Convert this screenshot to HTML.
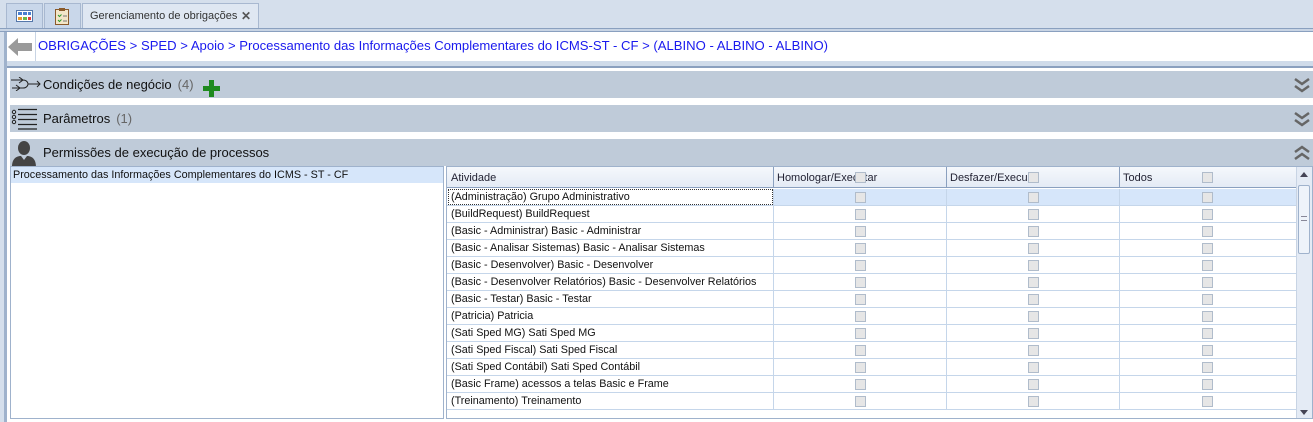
<!DOCTYPE html>
<html><head><meta charset="utf-8"><style>
*{box-sizing:border-box;margin:0;padding:0}
body{width:1313px;height:422px;background:#d5dfec;font-family:"Liberation Sans",sans-serif;position:relative;overflow:hidden}
.abs{position:absolute}
.tab{position:absolute;top:3px;height:25px;background:#c9d7ea;border:1px solid #a8b8d0;border-bottom:none}
.bar{position:absolute;left:10px;width:1303px;height:27px;background:#bfcbd9}
.bar .t{position:absolute;left:33px;top:6px;font-size:13px;color:#111}
.bar .n{color:#666;margin-left:6px}
.chev{position:absolute;right:2px;top:5px}
.row{position:absolute;left:447px;width:849px;height:17px;border-bottom:1px solid #c5d6ea;font-size:10.8px;color:#111}
.row span{position:absolute;left:4px;top:2px}
.cb{position:absolute;width:11px;height:11px;border:1px solid #b0bccb;background:#e6e6e6;top:3px}
.vl{position:absolute;top:168px;width:1px;height:250px;background:#c5d6ea}
</style></head><body>
<div class="tab" style="left:6px;width:37px"><svg class="abs" style="left:9px;top:6px" width="17" height="12"><rect x="0.5" y="0.5" width="16" height="11" fill="#fff" stroke="#5577aa"/><rect x="2" y="2" width="4" height="3" fill="#4a7fd0"/><rect x="7" y="2" width="4" height="3" fill="#4a7fd0"/><rect x="12" y="2" width="3" height="3" fill="#4a7fd0"/><rect x="2" y="7" width="4" height="3" fill="#e99a2a"/><rect x="7" y="7" width="4" height="3" fill="#6cb84a"/><rect x="12" y="7" width="3" height="3" fill="#e04040"/></svg></div>
<div class="tab" style="left:44px;width:37px"><svg class="abs" style="left:10px;top:3px" width="14" height="18"><rect x="0.5" y="2.5" width="13" height="15" fill="#f3e6c8" stroke="#8a5a2a"/><rect x="4" y="1" width="6" height="3" fill="#8a5a2a"/><path d="M3 8l1.5 1.5 2-2M3 13l1.5 1.5 2-2" stroke="#2a9a2a" fill="none"/><path d="M8 9h4M8 14h4" stroke="#777"/></svg></div>
<div class="tab" style="left:82px;width:177px;background:#dfe7f2;height:26px"><span class="abs" style="left:7px;top:6px;font-size:11px;color:#333">Gerenciamento de obrigações</span><span class="abs" style="left:158px;top:5px;font-size:12px;color:#555;font-weight:bold">✕</span></div>
<div class="abs" style="left:0;top:28px;width:1313px;height:4px;border-top:1px solid #8aa0bf;border-bottom:1px solid #8aa0bf;background:#c8d4e4"></div>
<div class="abs" style="left:4px;top:32px;width:3px;height:390px;background:#9fb2cc"></div>
<div class="abs" style="left:7px;top:32px;width:1306px;height:29px;background:#fff"></div>
<div class="abs" style="left:35px;top:32px;width:1px;height:29px;background:#c8d4e4"></div>
<svg class="abs" style="left:8px;top:37px" width="25" height="20"><path d="M0 10L10 1V6H24V14H10V19Z" fill="#9a9a9a"/></svg>
<div class="abs" style="left:38px;top:38px;font-size:13.1px;color:#1a1aee">OBRIGAÇÕES &gt; SPED &gt; Apoio &gt; Processamento das Informações Complementares do ICMS-ST - CF &gt; (ALBINO - ALBINO - ALBINO)</div>
<div class="abs" style="left:7px;top:61px;width:1306px;height:6px;background:#cfdbea"></div>
<div class="abs" style="left:646px;top:61px;font-size:9px;color:#8a9ab0;letter-spacing:0">····</div>
<div class="abs" style="left:7px;top:66px;width:1306px;height:2px;background:#8aa0bf"></div>
<div class="abs" style="left:7px;top:68px;width:1306px;height:354px;background:#fff"></div>

<div class="bar" style="top:71px"><svg class="abs" style="left:1px;top:6px" width="30" height="14"><path d="M0 3h12c4 0 5 3 5 4s-1 4-5 4H1M8 0l4 3-4 3M5 8l4 3-4 3M17 7h12M26 4l3 3-3 3" stroke="#222" fill="none"/></svg><span class="t">Condições de negócio<span class="n">(4)</span></span><svg class="abs" style="left:193px;top:9px" width="17" height="17"><path d="M6 0h5v6h6v5h-6v6H6v-6H0V6h6z" fill="#1e8a1e"/></svg><svg class="chev" width="18" height="18"><path d="M2 3l7 5 7-5M2 10l7 5 7-5" stroke="#666" stroke-width="2.5" fill="none"/></svg></div>
<div class="bar" style="top:105px"><svg class="abs" style="left:1px;top:3px" width="28" height="22"><circle cx="3" cy="4" r="1.7" stroke="#222" fill="none"/><circle cx="3" cy="9" r="1.7" stroke="#222" fill="none"/><circle cx="3" cy="14" r="1.7" stroke="#222" fill="none"/><path d="M7 1.5h19M7 6.5h19M7 11.5h19M7 16.5h19M7 21h19" stroke="#222" stroke-width="1.2"/></svg><span class="t">Parâmetros<span class="n">(1)</span></span><svg class="chev" width="18" height="18"><path d="M2 3l7 5 7-5M2 10l7 5 7-5" stroke="#666" stroke-width="2.5" fill="none"/></svg></div>
<div class="bar" style="top:139px"><svg class="abs" style="left:1px;top:1px" width="26" height="27"><ellipse cx="13" cy="8" rx="6" ry="7" fill="#444"/><path d="M1 27c0-8 4-11 9-11l3 4 3-4c5 0 9 3 9 11z" fill="#444"/></svg><span class="t">Permissões de execução de processos</span><svg class="chev" width="18" height="18"><path d="M2 8l7-5 7 5M2 15l7-5 7 5" stroke="#666" stroke-width="2.5" fill="none"/></svg></div>

<div class="abs" style="left:10px;top:166px;width:434px;height:253px;border:1px solid #9fb2cc;background:#fff"></div>
<div class="abs" style="left:11px;top:167px;width:432px;height:16px;background:#d6e6fa"></div>
<div class="abs" style="left:13px;top:169px;font-size:10.8px;color:#111">Processamento das Informações Complementares do ICMS - ST - CF</div>

<div class="abs" style="left:446px;top:166px;width:867px;height:253px;border:1px solid #9fb2cc;background:#fff"></div>
<div class="abs" style="left:447px;top:167px;width:849px;height:21px;background:linear-gradient(#f5f8fc,#e4ebf5);border-bottom:1px solid #8aa0bf;font-size:11px;color:#223">
<span class="abs" style="left:4px;top:5px">Atividade</span>
<span class="abs" style="left:330px;top:5px">Homologar/Executar</span>
<span class="abs" style="left:503px;top:5px">Desfazer/Execu</span>
<span class="abs" style="left:676px;top:5px">Todos</span>
<div class="cb" style="left:408px;top:5px"></div><div class="cb" style="left:581px;top:5px"></div><div class="cb" style="left:755px;top:5px"></div>
<div class="abs" style="left:326px;top:0;width:1px;height:21px;background:#8aa0bf"></div>
<div class="abs" style="left:499px;top:0;width:1px;height:21px;background:#8aa0bf"></div>
<div class="abs" style="left:672px;top:0;width:1px;height:21px;background:#8aa0bf"></div>
</div>
<div class="abs" style="left:773px;top:189px;width:523px;height:16px;background:#d6e6fa"></div>
<div id="rows"></div>
<div class="vl" style="left:773px;top:189px;height:221px"></div>
<div class="vl" style="left:946px;top:189px;height:221px"></div>
<div class="vl" style="left:1119px;top:189px;height:221px"></div>
<div class="abs" style="left:448px;top:189px;width:325px;height:16px;border:1px dotted #333"></div>
<div class="abs" style="left:1296px;top:167px;width:16px;height:251px;background:#e4ebf5;border-left:1px solid #c8d4e4"></div>
<div class="abs" style="left:1300px;top:172px;width:0;height:0;border:4px solid transparent;border-bottom:5px solid #445;border-top:none"></div>
<div class="abs" style="left:1298px;top:185px;width:12px;height:69px;border:1px solid #9fb2cc;border-radius:2px;background:#eef3fa"></div>
<div class="abs" style="left:1301px;top:216px;width:6px;height:5px;border-top:1px solid #889;border-bottom:1px solid #889"></div>
<div class="abs" style="left:1300px;top:410px;width:0;height:0;border:4px solid transparent;border-top:5px solid #445;border-bottom:none"></div>
<script>
var t=["(Administração) Grupo Administrativo","(BuildRequest) BuildRequest","(Basic - Administrar) Basic - Administrar","(Basic - Analisar Sistemas) Basic - Analisar Sistemas","(Basic - Desenvolver) Basic - Desenvolver","(Basic - Desenvolver Relatórios) Basic - Desenvolver Relatórios","(Basic - Testar) Basic - Testar","(Patricia) Patricia","(Sati Sped MG) Sati Sped MG","(Sati Sped Fiscal) Sati Sped Fiscal","(Sati Sped Contábil) Sati Sped Contábil","(Basic Frame) acessos a telas Basic e Frame","(Treinamento) Treinamento"];
var h="";t.forEach(function(s,i){h+='<div class="row" style="top:'+(189+i*17)+'px"><span>'+s+'</span><div class="cb" style="left:408px"></div><div class="cb" style="left:581px"></div><div class="cb" style="left:755px"></div></div>';});
document.getElementById("rows").innerHTML=h;
</script>
</body></html>
